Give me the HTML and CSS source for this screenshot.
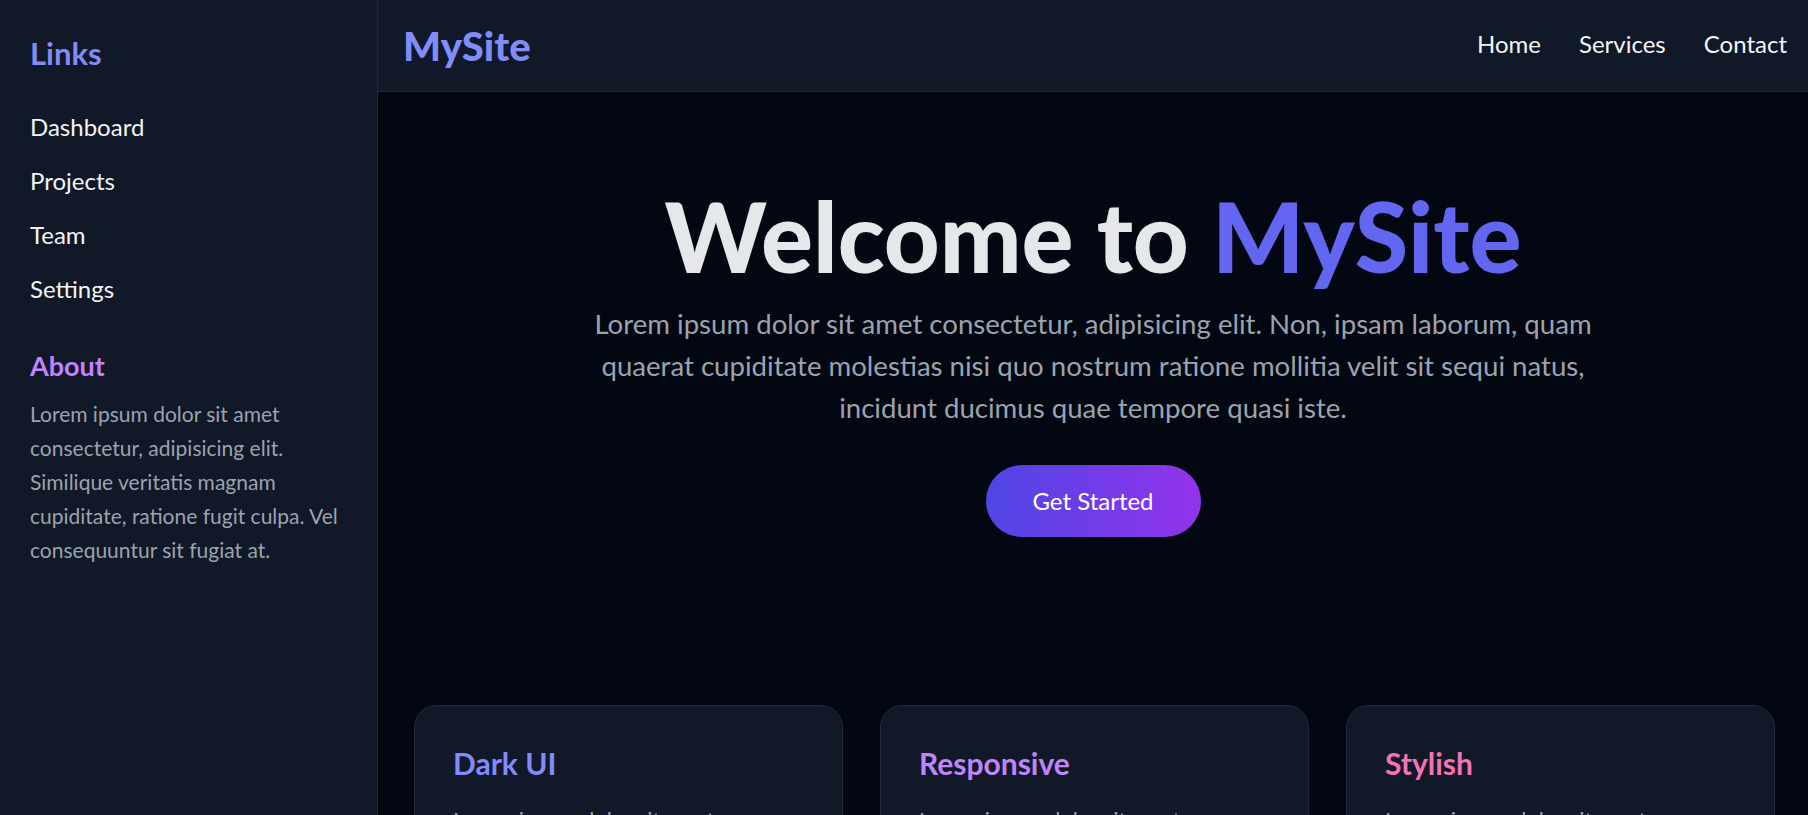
FILE: index.html
```html
<!DOCTYPE html>
<html lang="en">
<head>
<meta charset="utf-8">
<title>MySite</title>
<link rel="stylesheet" href="styles.css">
</head>
<body>
<div class="layout">
  <aside class="sidebar">
    <h2 class="side-title links-title">Links</h2>
    <ul class="side-nav">
      <li><a href="#">Dashboard</a></li>
      <li><a href="#">Projects</a></li>
      <li><a href="#">Team</a></li>
      <li><a href="#">Settings</a></li>
    </ul>
    <h3 class="side-title about-title">About</h3>
    <p class="about-text">Lorem ipsum dolor sit amet consectetur, adipisicing elit. Similique veritatis magnam cupiditate, ratione fugit culpa. Vel consequuntur sit fugiat at.</p>
  </aside>
  <main class="main">
    <header class="topbar">
      <div class="logo">MySite</div>
      <nav class="top-nav">
        <a href="#">Home</a>
        <a href="#">Services</a>
        <a href="#">Contact</a>
      </nav>
    </header>
    <section class="hero">
      <h1 class="hero-title">Welcome to <span class="accent">MySite</span></h1>
      <p class="hero-text">Lorem ipsum dolor sit amet consectetur, adipisicing elit. Non, ipsam laborum, quam quaerat cupiditate molestias nisi quo nostrum ratione mollitia velit sit sequi natus, incidunt ducimus quae tempore quasi iste.</p>
      <a class="cta" href="#">Get Started</a>
    </section>
    <section class="cards">
      <div class="card">
        <h3 class="card-title c-indigo">Dark UI</h3>
        <p class="card-text">Lorem ipsum dolor sit amet consectetur adipisicing elit. Quis, voluptatum.</p>
      </div>
      <div class="card">
        <h3 class="card-title c-purple">Responsive</h3>
        <p class="card-text">Lorem ipsum dolor sit amet consectetur adipisicing elit. Quis, voluptatum.</p>
      </div>
      <div class="card">
        <h3 class="card-title c-pink">Stylish</h3>
        <p class="card-text">Lorem ipsum dolor sit amet consectetur adipisicing elit. Quis, voluptatum.</p>
      </div>
    </section>
  </main>
</div>
</body>
</html>
```
FILE: styles.css
```css
* { box-sizing: border-box; }
html, body { margin: 0; padding: 0; height: 100%; }
body {
  background: #030712;
  color: #e5e7eb;
  font-family: Lato, "Open Sans", sans-serif;
  overflow: hidden;
}
a { text-decoration: none; color: inherit; }
.layout { display: flex; height: 100vh; }

.sidebar {
  width: 378px;
  flex: none;
  background: #111827;
  border-right: 1px solid #1f2937;
  padding: 33px 30px;
}
.side-title { margin: 0; font-weight: 700; }
.links-title { font-size: 31px; color: #818cf8; line-height: 40px; }
.side-nav { list-style: none; margin: 38px 0 0; padding: 0; display: flex; flex-direction: column; gap: 22px; }
.side-nav a { font-size: 24px; line-height: 32px; color: #f3f4f6; }
.about-title { margin-top: 44px; font-size: 27px; line-height: 34px; color: #c084fc; }
.about-text { margin: 14px 0 0; font-size: 21px; line-height: 34px; color: #9ca3af; }

.main { flex: 1; display: flex; flex-direction: column; min-width: 0; }
.topbar {
  height: 92px;
  flex: none;
  background: #111827;
  border-bottom: 1px solid #1f2937;
  display: flex;
  align-items: center;
  justify-content: space-between;
  padding: 0 21px 0 25px;
}
.logo { font-size: 40px; font-weight: 900; color: #818cf8; }
.top-nav { display: flex; gap: 38px; padding-bottom: 4px; }
.top-nav a { font-size: 24px; color: #f3f4f6; }

.hero { text-align: center; padding-top: 91px; display: flex; flex-direction: column; align-items: center; }
.hero-title { margin: 0; font-size: 97px; font-weight: 900; line-height: 1.1; color: #e5e7eb; }
.accent { color: #6366f1; }
.hero-text { margin: 13px 0 0; max-width: 1040px; font-size: 27.6px; line-height: 42px; color: #9ca3af; }
.cta {
  margin-top: 36px;
  width: 215px;
  height: 72px;
  border-radius: 36px;
  background: linear-gradient(90deg, #4f46e5, #9333ea);
  color: #fff;
  font-size: 24px;
  display: flex;
  align-items: center;
  justify-content: center;
}

.cards {
  display: grid;
  grid-template-columns: repeat(3, 1fr);
  gap: 37px;
  padding: 0 33px 0 36px;
  margin-top: 168px;
}
.card {
  background: #111827;
  border: 1px solid #1f2937;
  border-radius: 22px;
  padding: 37px 38px;
}
.card-title { margin: 0; font-size: 30px; font-weight: 700; line-height: 40px; }
.c-indigo { color: #818cf8; }
.c-purple { color: #c084fc; }
.c-pink { color: #f472b6; }
.card-text { margin: 20px 0 0; font-size: 22px; line-height: 34px; color: #9ca3af; }
```
